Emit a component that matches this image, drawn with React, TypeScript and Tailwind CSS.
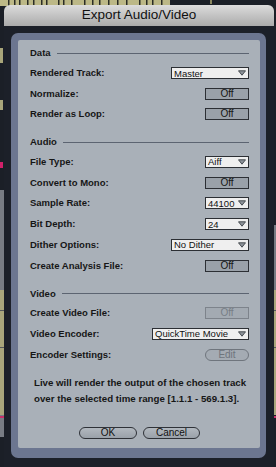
import React from "react";

const Arrow = () => (
  <svg width="8" height="6" viewBox="0 0 8 6" className="shrink-0">
    <polygon points="0.5,0.8 7.5,0.8 4,5.2" fill="#8e949b" stroke="#3b3f45" strokeWidth="0.9" />
  </svg>
);

function Dropdown({ value, width }: { value: string; width: string }) {
  return (
    <div
      className={`flex h-[12px] items-center justify-between gap-[2px] border border-[#2c2f34] bg-[#efefef] pl-[2px] pr-[2px] text-[9.5px] leading-none text-[#111] ${width}`}
    >
      <span className="whitespace-nowrap">{value}</span>
      <Arrow />
    </div>
  );
}

function Toggle({ disabled }: { disabled?: boolean }) {
  return (
    <div
      className={
        disabled
          ? "flex h-[12px] w-[44px] items-center justify-center border border-[#7d838b] bg-[#a3aab2] text-[10px] leading-none text-[#777e86]"
          : "flex h-[12px] w-[44px] items-center justify-center border border-[#2c2f34] bg-[#9aa1a9] text-[10px] leading-none text-[#151515]"
      }
    >
      Off
    </div>
  );
}

function Row({ label, h, children }: { label: string; h: string; children: React.ReactNode }) {
  return (
    <div className={`flex items-center justify-between ${h}`}>
      <span className="text-[9.5px] font-bold text-[#161616]">{label}</span>
      {children}
    </div>
  );
}

function Header({ title, className }: { title: string; className?: string }) {
  return (
    <div className={`flex h-[14px] items-center gap-[6px] ${className ?? ""}`}>
      <span className="text-[9.5px] font-bold text-[#161616]">{title}</span>
      <div className="h-px flex-1 bg-[#5c6471]" />
    </div>
  );
}

export default function App() {
  return (
    <div className="relative h-[467px] w-[276px] overflow-hidden bg-[#1b1f27] font-['Liberation_Sans',Arial,sans-serif]">
      {/* arrangement view behind the dialog */}
      <svg className="absolute left-0 top-0" width="276" height="6" viewBox="0 0 276 6">
        <rect x="0" y="0" width="170" height="6" fill="#bcb887" />
        {[8, 14, 19, 27, 33, 41, 46, 58, 63, 71, 84, 92, 99, 108, 117, 126, 139, 146, 152, 161].map((x) => (
          <rect key={x} x={x} y="0" width="1.5" height="6" fill="#2a2c26" />
        ))}
        <rect x="210" y="0" width="2" height="4" fill="#8a875f" />
      </svg>
      <div className="absolute left-0 top-[48px] h-[15px] w-[3px] bg-[#a8a57a]" />
      <div className="absolute left-0 top-[100px] h-[10px] w-[3px] bg-[#a8a57a]" />
      <div className="absolute left-0 top-[162px] h-[6px] w-[3px] bg-[#d0206a]" />
      <div className="absolute left-0 top-[190px] h-[247px] w-[4px] bg-[#787c84]" />
      <div className="absolute left-0 top-[290px] h-[125px] w-[4px] bg-[#a9a67c]" />
      <div className="absolute left-0 top-[310px] h-px w-[4px] bg-[#55585c]" />
      <div className="absolute left-0 top-[347px] h-px w-[4px] bg-[#55585c]" />
      <div className="absolute left-0 top-[416px] h-[2px] w-[4px] bg-[#c8306a]" />
      <div className="absolute right-0 top-[225px] h-[65px] w-[4px] bg-[#767a82]" />
      <div className="absolute right-0 top-[290px] h-[125px] w-[4px] bg-[#a9a67c]" />
      <div className="absolute right-0 top-[310px] h-px w-[4px] bg-[#55585c]" />
      <div className="absolute right-0 top-[347px] h-px w-[4px] bg-[#55585c]" />
      <div className="absolute right-0 top-[416px] h-[2px] w-[4px] bg-[#c8306a]" />

      <div className="relative pl-[4px] pr-[2px] pt-[5px]">
        <div className="flex h-[21px] items-center justify-center rounded-t-[6px] bg-gradient-to-b from-[#dcdcdc] to-[#ababab] text-[13.5px] text-[#111]">
          Export Audio/Video
        </div>
        <div className="bg-[#1c2029] pb-[9px] pl-[7px] pr-[8px] pt-[7px]">
          <div className="rounded-[7px] bg-[#6c7690] pb-[10px] pl-[7px] pr-[6px] pt-[7px]">
            <div className="h-[408px] rounded-[2px] bg-[#a9b0b8] pl-[12px] pr-[11px] pt-[6px]">
              <Header title="Data" />
              <div className="mt-[3px]">
                <Row label="Rendered Track:" h="h-[20.5px]">
                  <Dropdown value="Master" width="w-[78px]" />
                </Row>
                <Row label="Normalize:" h="h-[20.5px]">
                  <Toggle />
                </Row>
                <Row label="Render as Loop:" h="h-[20.5px]">
                  <Toggle />
                </Row>
              </div>

              <Header title="Audio" className="mt-[11px]" />
              <div className="mt-[2px]">
                <Row label="File Type:" h="h-[20.8px]">
                  <Dropdown value="Aiff" width="w-[44px]" />
                </Row>
                <Row label="Convert to Mono:" h="h-[20.8px]">
                  <Toggle />
                </Row>
                <Row label="Sample Rate:" h="h-[20.8px]">
                  <Dropdown value="44100" width="w-[44px]" />
                </Row>
                <Row label="Bit Depth:" h="h-[20.8px]">
                  <Dropdown value="24" width="w-[44px]" />
                </Row>
                <Row label="Dither Options:" h="h-[20.8px]">
                  <Dropdown value="No Dither" width="w-[78px]" />
                </Row>
                <Row label="Create Analysis File:" h="h-[20.8px]">
                  <Toggle />
                </Row>
              </div>

              <Header title="Video" className="mt-[10.5px]" />
              <div className="mt-[2px]">
                <Row label="Create Video File:" h="h-[20.8px]">
                  <Toggle disabled />
                </Row>
                <Row label="Video Encoder:" h="h-[20.8px]">
                  <Dropdown value="QuickTime Movie" width="w-[97px]" />
                </Row>
                <Row label="Encoder Settings:" h="h-[20.8px]">
                  <div className="flex h-[12px] w-[44px] items-center justify-center rounded-full border border-[#6f757d] bg-[#a4abb3] text-[10px] leading-none text-[#6e747c]">
                    Edit
                  </div>
                </Row>
              </div>

              <p className="mt-[10px] pl-[4px] text-[9.7px] font-bold leading-[15.7px] text-[#161616]">
                Live will render the output of the chosen track
                <br />
                over the selected time range [1.1.1 - 569.1.3].
              </p>

              <div className="mt-[20px] flex justify-center gap-[6px]">
                <div className="flex h-[12px] w-[58px] items-center justify-center rounded-full border border-[#2f3238] bg-gradient-to-b from-[#b2b8bf] to-[#9aa1a9] text-[10px] leading-none text-[#111]">
                  OK
                </div>
                <div className="flex h-[12px] w-[57px] items-center justify-center rounded-full border border-[#2f3238] bg-gradient-to-b from-[#b2b8bf] to-[#9aa1a9] text-[10px] leading-none text-[#111]">
                  Cancel
                </div>
              </div>
            </div>
          </div>
        </div>
      </div>
    </div>
  );
}
